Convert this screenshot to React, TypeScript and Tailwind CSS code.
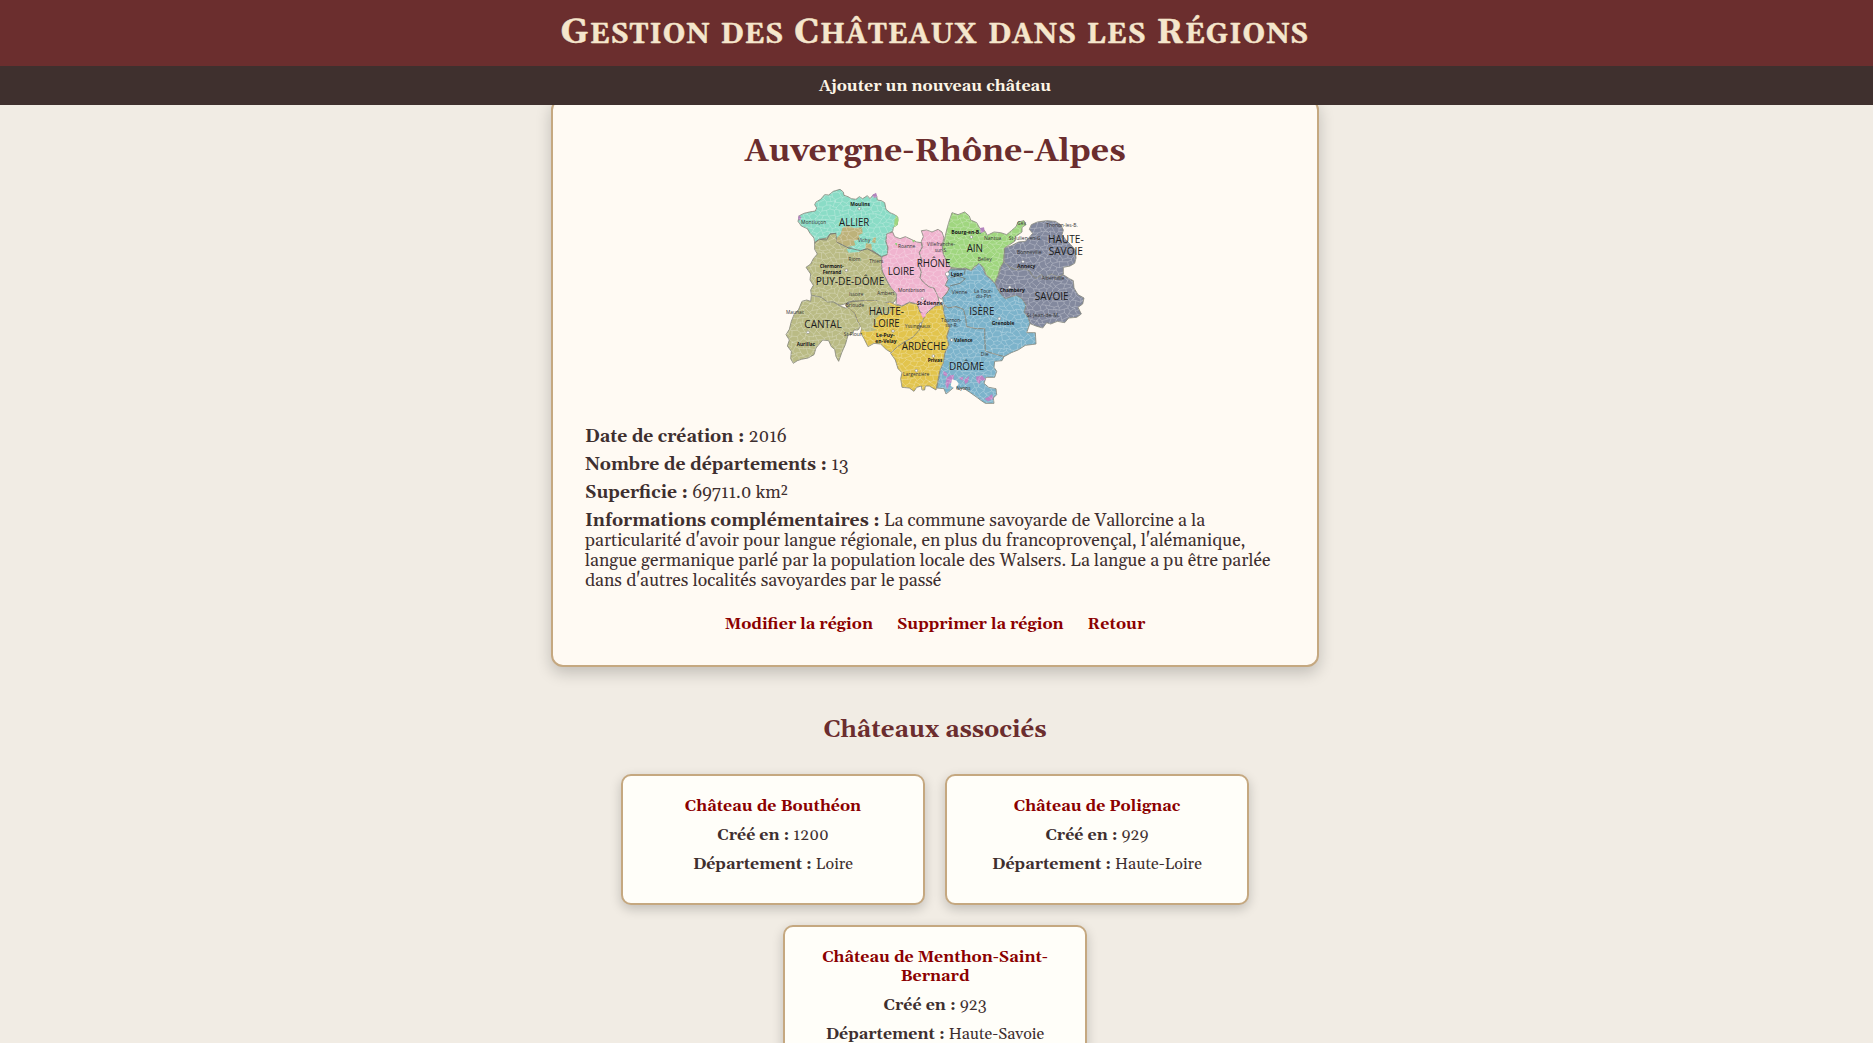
import type { ReactNode } from 'react';

type Area = { fill: string; d: string };

const areas: Area[] = [
  // Allier
  { fill: '#8adcc6', d: 'M58 107 L72 100 L88 96 L106 93 L110 84 L104 74 L108 66 L122 58 L134 44 L146 45 L160 34 L180 28 L190 36 L192 46 L204 50 L214 56 L228 58 L238 50 L248 56 L262 47 L270 56 L280 44 L290 48 L292 60 L304 62 L314 68 L318 88 L330 98 L344 104 L354 112 L352 134 L340 142 L338 154 L320 162 L318 186 L324 204 L322 224 L304 230 L292 222 L276 210 L262 208 L242 212 L226 206 L206 204 L188 198 L170 186 L168 172 L150 174 L128 180 L104 188 L102 174 L90 160 L82 146 L64 138 L54 124 Z' },
  // Puy-de-Dome
  { fill: '#babb85', d: 'M104 188 L118 178 L140 174 L150 162 L168 160 L170 186 L188 196 L206 204 L226 206 L242 212 L262 206 L276 212 L292 222 L304 232 L308 250 L304 268 L314 286 L322 306 L332 322 L348 338 L350 356 L340 368 L322 366 L306 374 L290 362 L272 372 L254 362 L236 366 L220 362 L200 370 L180 376 L160 366 L142 368 L124 352 L94 346 L92 330 L100 316 L90 300 L92 282 L78 262 L92 252 L100 236 L112 222 L104 208 Z' },
  // Cantal
  { fill: '#babb85', d: 'M94 346 L124 352 L142 366 L160 366 L180 378 L196 384 L210 382 L224 400 L232 420 L242 438 L234 450 L222 450 L216 462 L204 466 L196 494 L186 516 L176 544 L168 530 L164 508 L154 500 L146 482 L128 480 L118 492 L108 504 L102 524 L84 534 L64 538 L52 542 L40 550 L32 536 L34 514 L22 498 L28 480 L18 464 L28 448 L34 424 L42 404 L56 388 L66 364 L80 360 L92 364 Z' },
  // Haute-Loire
  { fill: '#e2c44d', d: 'M196 376 L220 364 L254 362 L290 362 L306 374 L330 366 L350 376 L366 378 L388 368 L412 372 L420 396 L436 404 L440 424 L418 430 L420 450 L404 468 L390 478 L372 486 L352 502 L334 518 L318 508 L302 492 L282 490 L264 500 L252 476 L242 458 L246 442 L234 424 L224 398 L208 386 Z' },
  // Loire
  { fill: '#f0b4cf', d: 'M320 162 L338 156 L344 170 L360 176 L376 170 L398 180 L410 186 L424 188 L426 202 L418 218 L424 236 L416 254 L424 276 L420 294 L432 308 L448 320 L462 324 L472 342 L478 368 L462 380 L448 392 L436 404 L420 396 L412 372 L388 366 L366 378 L348 372 L350 342 L332 322 L320 300 L308 276 L304 252 L306 230 L322 224 L324 202 L318 184 Z' },
  // Rhone
  { fill: '#f0b4cf', d: 'M424 152 L440 150 L456 156 L474 148 L486 156 L492 174 L486 196 L490 220 L500 240 L512 252 L514 266 L500 280 L506 296 L496 316 L508 326 L496 344 L484 358 L474 350 L462 324 L446 320 L430 306 L420 294 L424 276 L416 254 L424 236 L418 218 L428 200 L424 184 L430 170 Z' },
  // Ain
  { fill: '#a0d67f', d: 'M516 98 L534 104 L554 96 L568 108 L572 120 L590 128 L600 146 L614 152 L622 166 L642 156 L662 158 L680 164 L694 152 L708 140 L714 126 L732 122 L738 134 L726 142 L726 156 L706 170 L704 184 L686 196 L674 204 L672 226 L670 248 L660 264 L654 286 L644 310 L632 296 L618 284 L612 266 L600 252 L582 260 L574 272 L556 264 L540 266 L512 262 L500 244 L490 222 L488 200 L494 176 L500 150 L506 128 Z' },
  // Haute-Savoie
  { fill: '#83899e', d: 'M674 204 L692 198 L716 186 L736 184 L748 172 L758 160 L748 148 L754 134 L772 126 L800 122 L826 124 L842 134 L850 150 L846 164 L858 180 L872 194 L886 210 L888 234 L884 250 L870 258 L850 262 L850 282 L834 292 L814 282 L796 294 L784 284 L768 296 L756 286 L748 272 L730 266 L708 270 L690 262 L672 250 Z' },
  // Savoie
  { fill: '#83899e', d: 'M672 246 L690 262 L708 270 L730 266 L748 272 L756 286 L768 296 L784 284 L796 294 L814 282 L834 292 L850 284 L868 296 L880 302 L882 324 L894 344 L912 354 L908 372 L894 382 L904 402 L890 412 L866 414 L854 428 L832 424 L812 432 L800 428 L788 444 L768 438 L748 430 L744 412 L732 398 L738 374 L722 352 L702 346 L686 358 L668 354 L656 338 L644 312 L656 286 L662 264 Z' },
  // Isere
  { fill: '#7cb3cb', d: 'M596 250 L608 262 L616 284 L632 298 L646 312 L652 326 L662 342 L676 356 L694 350 L710 346 L726 356 L738 376 L732 396 L744 412 L750 430 L740 458 L766 458 L768 492 L736 496 L714 510 L694 518 L672 530 L650 524 L616 514 L614 474 L614 446 L588 446 L560 440 L556 410 L550 388 L528 380 L504 384 L490 372 L488 352 L502 338 L508 324 L496 316 L504 298 L498 284 L512 266 L540 266 L556 266 L574 272 L586 262 Z' },
  // Drome
  { fill: '#7cb3cb', d: 'M492 376 L504 384 L528 380 L550 388 L556 410 L560 440 L588 446 L614 446 L614 474 L616 514 L650 524 L672 530 L666 542 L644 544 L642 562 L650 574 L644 592 L618 592 L612 610 L626 622 L648 626 L650 644 L640 654 L642 670 L616 670 L604 662 L588 650 L568 636 L550 624 L534 628 L524 620 L508 634 L498 642 L492 626 L470 624 L476 596 L480 570 L490 548 L494 520 L506 496 L500 470 L510 440 L496 420 L490 400 Z' },
  // Ardeche
  { fill: '#e2c44d', d: 'M488 374 L492 400 L498 424 L508 442 L500 470 L506 494 L494 520 L490 548 L480 570 L474 600 L468 630 L448 618 L436 618 L434 630 L426 630 L424 618 L410 622 L402 634 L388 624 L366 622 L362 596 L366 578 L354 566 L346 540 L332 520 L352 500 L374 486 L398 472 L418 450 L426 428 L436 404 L448 392 L466 378 Z' },
];

const enclaves: Area[] = [
  { fill: '#babb85', d: 'M200 377 L220 365 L254 364 L290 364 L320 370 L340 380 L328 402 L300 404 L286 416 L288 432 L276 440 L290 450 L262 456 L246 450 L236 424 L226 398 L210 386 Z' },
  { fill: '#bdb27a', d: 'M188 142 L206 138 L222 144 L246 142 L248 160 L236 166 L240 178 L222 182 L226 196 L200 202 L184 192 L168 188 L172 172 L182 162 Z' },
  { fill: '#bdb27a', d: 'M258 190 L274 192 L276 210 L256 206 Z M280 174 L288 172 L286 190 L276 186 Z' },
  { fill: '#8adcc6', d: 'M200 208 L226 202 L252 206 L236 216 L206 218 Z' },
  { fill: '#b383bd', d: 'M276 46 L288 38 L292 50 L282 54 Z' },
  { fill: '#b383bd', d: 'M56 106 L64 112 L60 122 L54 116 Z' },
  { fill: '#a0d67f', d: 'M344 118 L350 104 L356 120 L352 136 L342 142 Z' },
  { fill: '#8fd07a', d: 'M344 190 L352 188 L350 198 Z M396 180 L406 180 L400 188 Z' },
  { fill: '#b383bd', d: 'M600 144 L612 142 L614 154 L602 160 Z' },
  { fill: '#f0a3cf', d: 'M422 398 L434 398 L438 408 L428 414 Z' },
  { fill: '#bd84c4', d: 'M490 572 L502 580 L500 590 L490 584 Z M500 594 L512 586 L522 584 L520 602 L508 612 L502 628 L496 612 Z M536 594 L550 590 L548 602 Z M552 600 L568 588 L564 606 L556 612 Z M588 590 L606 586 L618 600 L602 602 L598 612 L590 604 Z M614 656 L626 650 L636 642 L640 656 L624 664 Z' },
  { fill: '#fffaf3', d: 'M516 598 L530 602 L536 612 L526 626 L512 618 Z' },
];

const innerBorders =
  'M104 188 L118 178 L140 180 L150 162 L168 160 M170 186 L206 204 L242 212 L262 206 L304 230 M196 374 L204 366 L252 362 M512 292 L534 288 L556 296 L540 310 L510 318 M514 270 L556 268 L552 284';

const W = 930;
const H = 690;
const STEP = 10;

// Irregular honeycomb that stands for the commune boundaries.
function communes(): string {
  let seed = 7;
  const rnd = () => {
    seed = (seed * 16807) % 2147483647;
    return seed / 2147483647;
  };
  const rows = Math.ceil(H / (STEP * 1.3));
  const cols = Math.ceil(W / STEP);
  const pts: string[][] = [];
  for (let r = 0; r <= rows; r++) {
    pts.push([]);
    for (let c = 0; c <= cols; c++) {
      const x = c * STEP + (rnd() - 0.5) * 11;
      const y = r * STEP * 1.3 + ((r + c) % 2 ? 2 : -2) + (rnd() - 0.5) * 11;
      pts[r].push(`${x.toFixed(1)} ${y.toFixed(1)}`);
    }
  }
  let d = '';
  for (let r = 0; r <= rows; r++) {
    d += `M${pts[r].join('L')}`;
    for (let c = 0; c <= cols; c++) {
      if (r < rows && (r + c) % 2) d += `M${pts[r][c]}L${pts[r + 1][c]}`;
    }
  }
  return d;
}

const communePath = communes();

type Label = [text: string, x: number, y: number, width: number];

const departments: Label[] = [
  ['ALLIER', 177, 138, 91],
  ['PUY-DE-DÔME', 107, 314, 206],
  ['CANTAL', 73, 444, 112],
  ['HAUTE-', 266, 404, 106],
  ['LOIRE', 280, 441, 79],
  ['LOIRE', 323, 284, 80],
  ['RHÔNE', 410, 262, 101],
  ['AIN', 560, 216, 49],
  ['HAUTE-', 804, 188, 107],
  ['SAVOIE', 806, 225, 103],
  ['SAVOIE', 764, 360, 102],
  ['ISÈRE', 568, 404, 75],
  ['ARDÈCHE', 365, 510, 133],
  ['DRÔME', 507, 569, 106],
];

const mainTowns: Label[] = [
  ['Moulins', 211, 78, 59],
  ['Clermont-', 119, 265, 72],
  ['Ferrand', 128, 281, 56],
  ['Aurillac', 50, 497, 55],
  ['Le-Puy-', 288, 472, 56],
  ['en-Velay', 286, 488, 64],
  ['St-Étienne', 411, 375, 77],
  ['Bourg-en-B.', 514, 162, 88],
  ['Lyon', 512, 287, 36],
  ['Annecy', 712, 263, 54],
  ['Chambéry', 659, 337, 75],
  ['Grenoble', 635, 434, 68],
  ['Valence', 522, 486, 56],
  ['Privas', 443, 545, 44],
];

const towns: Label[] = [
  ['Montluçon', 63, 131, 76],
  ['Vichy', 233, 185, 38],
  ['Riom', 205, 242, 36],
  ['Thiers', 268, 248, 42],
  ['Issoire', 207, 347, 43],
  ['Ambert', 291, 345, 53],
  ['Mauriac', 18, 402, 54],
  ['Brioude', 197, 381, 55],
  ['St-Flour', 191, 469, 55],
  ['Yssingeaux', 374, 445, 77],
  ['Largentière', 369, 588, 79],
  ['Roanne', 354, 203, 52],
  ['Montbrison', 354, 335, 81],
  ['Villefranche-', 441, 199, 84],
  ['sur-S.', 464, 215, 38],
  ['Nantua', 612, 179, 52],
  ['Belley', 593, 242, 42],
  ['Gex', 712, 135, 26],
  ['St-Julien-en-G.', 686, 180, 100],
  ['Thonon-les-B.', 799, 140, 94],
  ['Bonneville', 711, 221, 74],
  ['Albertville', 785, 299, 69],
  ['St-Jean-de-M.', 740, 412, 98],
  ['Vienne', 515, 341, 48],
  ['La Tour-', 582, 340, 56],
  ['du-Pin', 588, 355, 46],
  ['Tournon-', 483, 425, 62],
  ['sur-R.', 496, 441, 38],
  ['Die', 602, 528, 24],
  ['Nyons', 529, 629, 43],
];

const markers = [
  [238, 86], [199, 271], [84, 457], [339, 453], [427, 356], [574, 171], [729, 245],
  [689, 322], [658, 416], [515, 480], [460, 528], [409, 572],
];

function Labels({ items, className }: { items: Label[]; className: string }) {
  return (
    <g className={className}>
      {items.map(([text, x, y, width]) => (
        <text key={`${text}${x}`} x={x} y={y} textLength={width} lengthAdjust="spacingAndGlyphs">
          {text}
        </text>
      ))}
    </g>
  );
}

function RegionMap() {
  return (
    <svg
      viewBox="15 0 900 690"
      className="mx-auto mt-[10px] block h-[230px] w-[300px] overflow-visible font-['Open_Sans','Noto_Sans',sans-serif]"
      role="img"
    >
      <clipPath id="region">
        {areas.map((a) => (
          <path key={a.d} d={a.d} />
        ))}
      </clipPath>
      {areas.map((a) => (
        <path key={a.d} d={a.d} fill={a.fill} stroke="#85877c" strokeWidth="2.5" strokeLinejoin="round" />
      ))}
      {enclaves.map((a) => (
        <path key={a.d} d={a.d} fill={a.fill} />
      ))}
      <path d={communePath} clipPath="url(#region)" fill="none" stroke="#fff" strokeOpacity="0.36" strokeWidth="2" />
      <path d={innerBorders} fill="none" stroke="#777a72" strokeWidth="2.5" />
      {markers.map(([x, y]) => (
        <circle key={`${x}-${y}`} cx={x} cy={y} r="4" fill="#fff" stroke="#777" strokeWidth="1.5" />
      ))}
      <circle cx="502" cy="282" r="6" fill="#fff" stroke="#777" strokeWidth="1.5" />
      <Labels items={towns} className="fill-[#333] text-[18px]" />
      <Labels items={mainTowns} className="fill-[#161616] text-[18px] font-bold" />
      <Labels items={departments} className="fill-[#1c1c1c] text-[35px]" />
    </svg>
  );
}

function Field({ label, children }: { label: string; children: ReactNode }) {
  return (
    <p>
      <strong>{label} :</strong> {children}
    </p>
  );
}

const castles = [
  { name: 'Château de Bouthéon', year: 1200, department: 'Loire' },
  { name: 'Château de Polignac', year: 929, department: 'Haute-Loire' },
  { name: 'Château de Menthon-Saint-Bernard', year: 923, department: 'Haute-Savoie' },
];

const titleWords = ['Gestion', 'des', 'Châteaux', 'dans', 'les', 'Régions'];
const capitalised = /^[A-Z]/;

export default function App() {
  return (
    <div className="h-[1043px] overflow-hidden bg-[#f1ece4] font-[Gelasio,Georgia,'Liberation_Serif',serif] text-base text-[#3e2f2f]">
      <header className="relative z-10 flex h-[66px] items-center justify-center bg-[#6b2e2e] pt-[2px] pr-[3px]">
        <h1 className="flex items-baseline gap-[10px] text-[27.5px] leading-[40px] font-bold tracking-[1.05px] text-[#f5e6cc] uppercase [-webkit-text-stroke:0.5px_#f5e6cc]">
          {titleWords.map((word) => (
            <span key={word} className={capitalised.test(word) ? 'first-letter:text-[34.5px]' : ''}>
              {word}
            </span>
          ))}
        </h1>
      </header>
      <nav className="relative z-10 flex h-[39px] items-center justify-center bg-[#3f302e] pt-[2px] pr-[3px]">
        <a className="leading-[19px] font-bold text-[#fdf5e6]">Ajouter un nouveau château</a>
      </nav>
      <main className="flex flex-col items-center pr-[3px]">
        <section className="-mt-[7px] h-[569px] w-3xl rounded-xl border-2 border-[#c5a880] bg-[#fffaf3] px-8 pt-[34px] shadow-[0_6px_16px_rgba(0,0,0,0.2)]">
          <h2 className="text-center text-[32px] leading-9 font-bold text-[#6b2d2e]">Auvergne-Rhône-Alpes</h2>
          <RegionMap />
          <div className="mt-[17px] flex flex-col gap-2 text-[17.6px] leading-5">
            <Field label="Date de création">2016</Field>
            <Field label="Nombre de départements">13</Field>
            <Field label="Superficie">
              69711.0 km
              <span className="relative top-[3px] font-['Liberation_Serif'] text-[23px] leading-[0]">²</span>
            </Field>
            <Field label="Informations complémentaires">
              La commune savoyarde de Vallorcine a la particularité d'avoir pour langue régionale, en plus du
              francoprovençal, l'alémanique, langue germanique parlé par la population locale des Walsers. La langue a
              pu être parlée dans d'autres localités savoyardes par le passé
            </Field>
          </div>
          <div className="mt-6 flex justify-center gap-6 leading-[19px] font-bold text-[#8b0000]">
            <a>Modifier la région</a>
            <a>Supprimer la région</a>
            <a>Retour</a>
          </div>
        </section>
        <h2 className="mt-[49px] text-2xl leading-7 font-bold text-[#6b2d2e]">Châteaux associés</h2>
        <ul className="mt-[30px] flex w-3xl flex-wrap justify-center gap-5">
          {castles.map((castle) => (
            <li
              key={castle.name}
              className="flex min-h-[131px] w-[304px] flex-col gap-2.5 rounded-[10px] border-2 border-[#c5a880] bg-[#fffef9] px-5 pt-[21px] text-center leading-[19px] shadow-[0_4px_12px_rgba(0,0,0,0.2)]"
            >
              <a className="font-bold text-[#8b0000]">{castle.name}</a>
              <Field label="Créé en">{castle.year}</Field>
              <Field label="Département">{castle.department}</Field>
            </li>
          ))}
        </ul>
      </main>
    </div>
  );
}
